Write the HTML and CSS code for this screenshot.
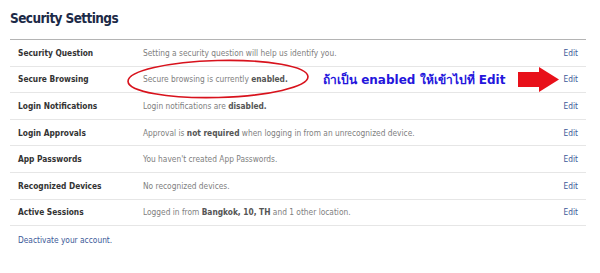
FILE: index.html
```html
<!DOCTYPE html>
<html lang="en">
<head>
    <meta charset="UTF-8">
    <title>Security Settings</title>
    <link rel="stylesheet" href="styles.css">
</head>
<body>
    <div class="page">
        <h1>Security Settings</h1>
        <div class="settings">
            <div class="row">
                <div class="label">Security Question</div>
                <div class="desc">Setting a security question will help us identify you.</div>
                <a class="edit" href="#">Edit</a>
            </div>
            <div class="row">
                <div class="label">Secure Browsing</div>
                <div class="desc">Secure browsing is currently <b>enabled.</b></div>
                <a class="edit" href="#">Edit</a>
            </div>
            <div class="row">
                <div class="label">Login Notifications</div>
                <div class="desc">Login notifications are <b>disabled.</b></div>
                <a class="edit" href="#">Edit</a>
            </div>
            <div class="row">
                <div class="label">Login Approvals</div>
                <div class="desc">Approval is <b>not required</b> when logging in from an unrecognized device.</div>
                <a class="edit" href="#">Edit</a>
            </div>
            <div class="row">
                <div class="label">App Passwords</div>
                <div class="desc">You haven't created App Passwords.</div>
                <a class="edit" href="#">Edit</a>
            </div>
            <div class="row">
                <div class="label">Recognized Devices</div>
                <div class="desc">No recognized devices.</div>
                <a class="edit" href="#">Edit</a>
            </div>
            <div class="row">
                <div class="label">Active Sessions</div>
                <div class="desc">Logged in from <b>Bangkok, 10, TH</b> and 1 other location.</div>
                <a class="edit" href="#">Edit</a>
            </div>
        </div>
        <a class="deactivate" href="#">Deactivate your account.</a>

        <!-- annotation drawn over the screenshot -->
        <svg class="circle" width="190" height="44" viewBox="0 0 190 44">
            <ellipse cx="95" cy="22" rx="90" ry="18.5" fill="none" stroke="#d8121c" stroke-width="1.6" transform="rotate(-1.5 95 22)"/>
        </svg>
        <div class="note">ถ้าเป็น enabled ให้เข้าไปที่ Edit</div>
        <svg class="arrow" width="42" height="26" viewBox="0 0 42 26">
            <polygon points="0,5 21,5 21,0 41,12.5 21,25 21,20 0,20" fill="#e8101a"/>
        </svg>
    </div>
</body>
</html>
```

FILE: styles.css
```css
body {
    margin: 0;
    background: #fff;
    font-family: "DejaVu Sans Condensed", "DejaVu Sans", Tahoma, sans-serif;
}
.page {
    position: relative;
    width: 576px;
    padding: 10px 0 0 10px;
}
h1 {
    margin: 0 0 12px 0;
    height: 17px;
    font-size: 13.5px;
    line-height: 17px;
    color: #1c2a47;
    letter-spacing: -0.6px;
}
.settings {
    border-top: 1px solid #b4b4b4;
}
.row {
    display: flex;
    align-items: center;
    box-sizing: border-box;
    height: 26.6px;
    padding: 0 8px;
    border-bottom: 1px solid #e6e6e6;
    font-size: 8.3px;
}
.label {
    width: 125px;
    font-weight: bold;
    color: #333;
}
.desc {
    flex: 1;
    color: #808080;
}
.desc b {
    color: #555;
}
.edit, .deactivate {
    color: #3b5998;
    text-decoration: none;
}
.deactivate {
    display: block;
    margin: 9px 0 0 8px;
    font-size: 8.3px;
}

.circle {
    position: absolute;
    left: 123px;
    top: 57px;
}
.note {
    position: absolute;
    left: 323px;
    top: 70px;
    font-family: "DejaVu Sans", sans-serif;
    font-size: 12px;
    font-weight: bold;
    color: #2415dc;
    white-space: nowrap;
}
.arrow {
    position: absolute;
    left: 518px;
    top: 67px;
}
```
